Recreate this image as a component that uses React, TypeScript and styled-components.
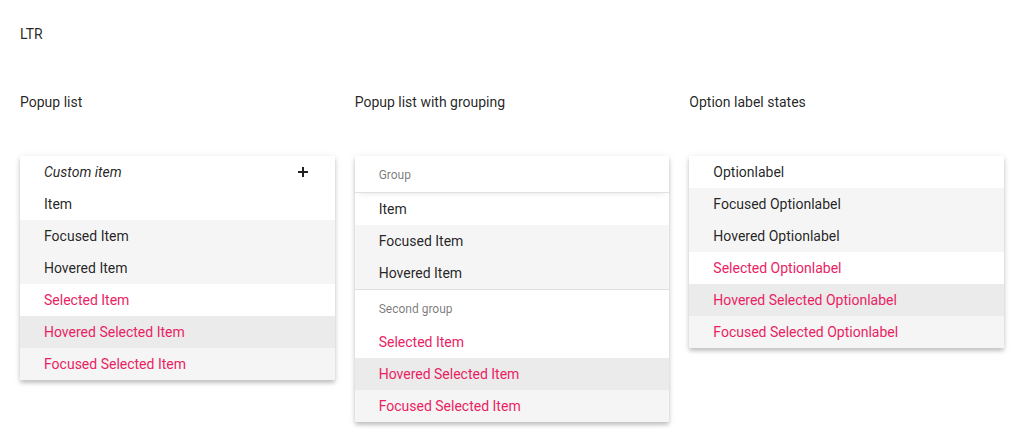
import React from 'react';
import styled, { createGlobalStyle, css } from 'styled-components';

const GlobalStyle = createGlobalStyle`
  html, body {
    margin: 0;
    background: #ffffff;
  }
  body {
    font-family: Roboto, "Noto Sans", sans-serif;
    color: rgba(0, 0, 0, 0.87);
    font-size: 14px;
  }
`;

type RowState = 'normal' | 'focused' | 'hovered' | 'selected' | 'hoveredSelected' | 'focusedSelected';

const Page = styled.div`
  padding: 24px 20px 20px;
`;

const Direction = styled.div`
  font-size: 14px;
  line-height: 20px;
  margin-bottom: 48px;
`;

const Columns = styled.div`
  display: grid;
  grid-template-columns: repeat(3, 1fr);
  column-gap: 20px;
  align-items: start;
`;

const Column = styled.section`
  display: flex;
  flex-direction: column;
`;

const Title = styled.h3`
  margin: 0 0 44px;
  font-size: 14px;
  font-weight: 400;
  line-height: 20px;
`;

const Popup = styled.ul`
  list-style: none;
  margin: 0;
  padding: 0;
  background: #ffffff;
  box-shadow: 0 3px 4px rgba(0, 0, 0, 0.2), 0 1px 8px rgba(0, 0, 0, 0.08);
`;

const Row = styled.li<{ $state: RowState }>`
  display: flex;
  align-items: center;
  justify-content: space-between;
  height: 32px;
  padding: 0 24px;
  box-sizing: border-box;
  font-size: 14px;
  ${({ $state }) => {
    switch ($state) {
      case 'focused':
      case 'hovered':
        return css`background: #f5f5f5;`;
      case 'selected':
        return css`color: #e91e63;`;
      case 'hoveredSelected':
        return css`color: #e91e63; background: #ebebeb;`;
      case 'focusedSelected':
        return css`color: #e91e63; background: #f5f5f5;`;
      default:
        return '';
    }
  }}
`;

const CustomText = styled.span`
  font-style: italic;
`;

const AddIcon = styled.svg`
  width: 12px;
  height: 12px;
  margin-right: 2px;
`;

const GroupHeader = styled.li<{ $sticky?: boolean }>`
  display: flex;
  align-items: center;
  padding: 0 24px;
  box-sizing: content-box;
  font-size: 12px;
  color: rgba(0, 0, 0, 0.54);
  ${({ $sticky }) =>
    $sticky
      ? css`
          height: 35px;
          padding-top: 1px;
          border-bottom: 1px solid rgba(0, 0, 0, 0.12);
          box-shadow: 0 4px 6px -4px rgba(0, 0, 0, 0.12);
          position: relative;
        `
      : css`
          height: 34px;
          padding-top: 2px;
          border-top: 1px solid rgba(0, 0, 0, 0.12);
        `}
`;

const basicRows: { label: string; state: RowState }[] = [
  { label: 'Item', state: 'normal' },
  { label: 'Focused Item', state: 'focused' },
  { label: 'Hovered Item', state: 'hovered' },
  { label: 'Selected Item', state: 'selected' },
  { label: 'Hovered Selected Item', state: 'hoveredSelected' },
  { label: 'Focused Selected Item', state: 'focusedSelected' },
];

const labelRows: { label: string; state: RowState }[] = [
  { label: 'Optionlabel', state: 'normal' },
  { label: 'Focused Optionlabel', state: 'focused' },
  { label: 'Hovered Optionlabel', state: 'hovered' },
  { label: 'Selected Optionlabel', state: 'selected' },
  { label: 'Hovered Selected Optionlabel', state: 'hoveredSelected' },
  { label: 'Focused Selected Optionlabel', state: 'focusedSelected' },
];

const App = () => {
  return (
    <Page>
      <GlobalStyle />
      <Direction>LTR</Direction>
      <Columns>
        <Column>
          <Title>Popup list</Title>
          <Popup>
            <Row $state="normal">
              <CustomText>Custom item</CustomText>
              <AddIcon viewBox="0 0 12 12">
                <path d="M6 1v10M1 6h10" stroke="#212121" strokeWidth="2" />
              </AddIcon>
            </Row>
            {basicRows.map((r) => (
              <Row key={r.label} $state={r.state}>{r.label}</Row>
            ))}
          </Popup>
        </Column>

        <Column>
          <Title>Popup list with grouping</Title>
          <Popup>
            <GroupHeader $sticky>Group</GroupHeader>
            {basicRows.slice(0, 3).map((r) => (
              <Row key={r.label} $state={r.state}>{r.label}</Row>
            ))}
            <GroupHeader>Second group</GroupHeader>
            {basicRows.slice(3).map((r) => (
              <Row key={r.label} $state={r.state}>{r.label}</Row>
            ))}
          </Popup>
        </Column>

        <Column>
          <Title>Option label states</Title>
          <Popup>
            {labelRows.map((r) => (
              <Row key={r.label} $state={r.state}>{r.label}</Row>
            ))}
          </Popup>
        </Column>
      </Columns>
    </Page>
  );
};

export default App;
